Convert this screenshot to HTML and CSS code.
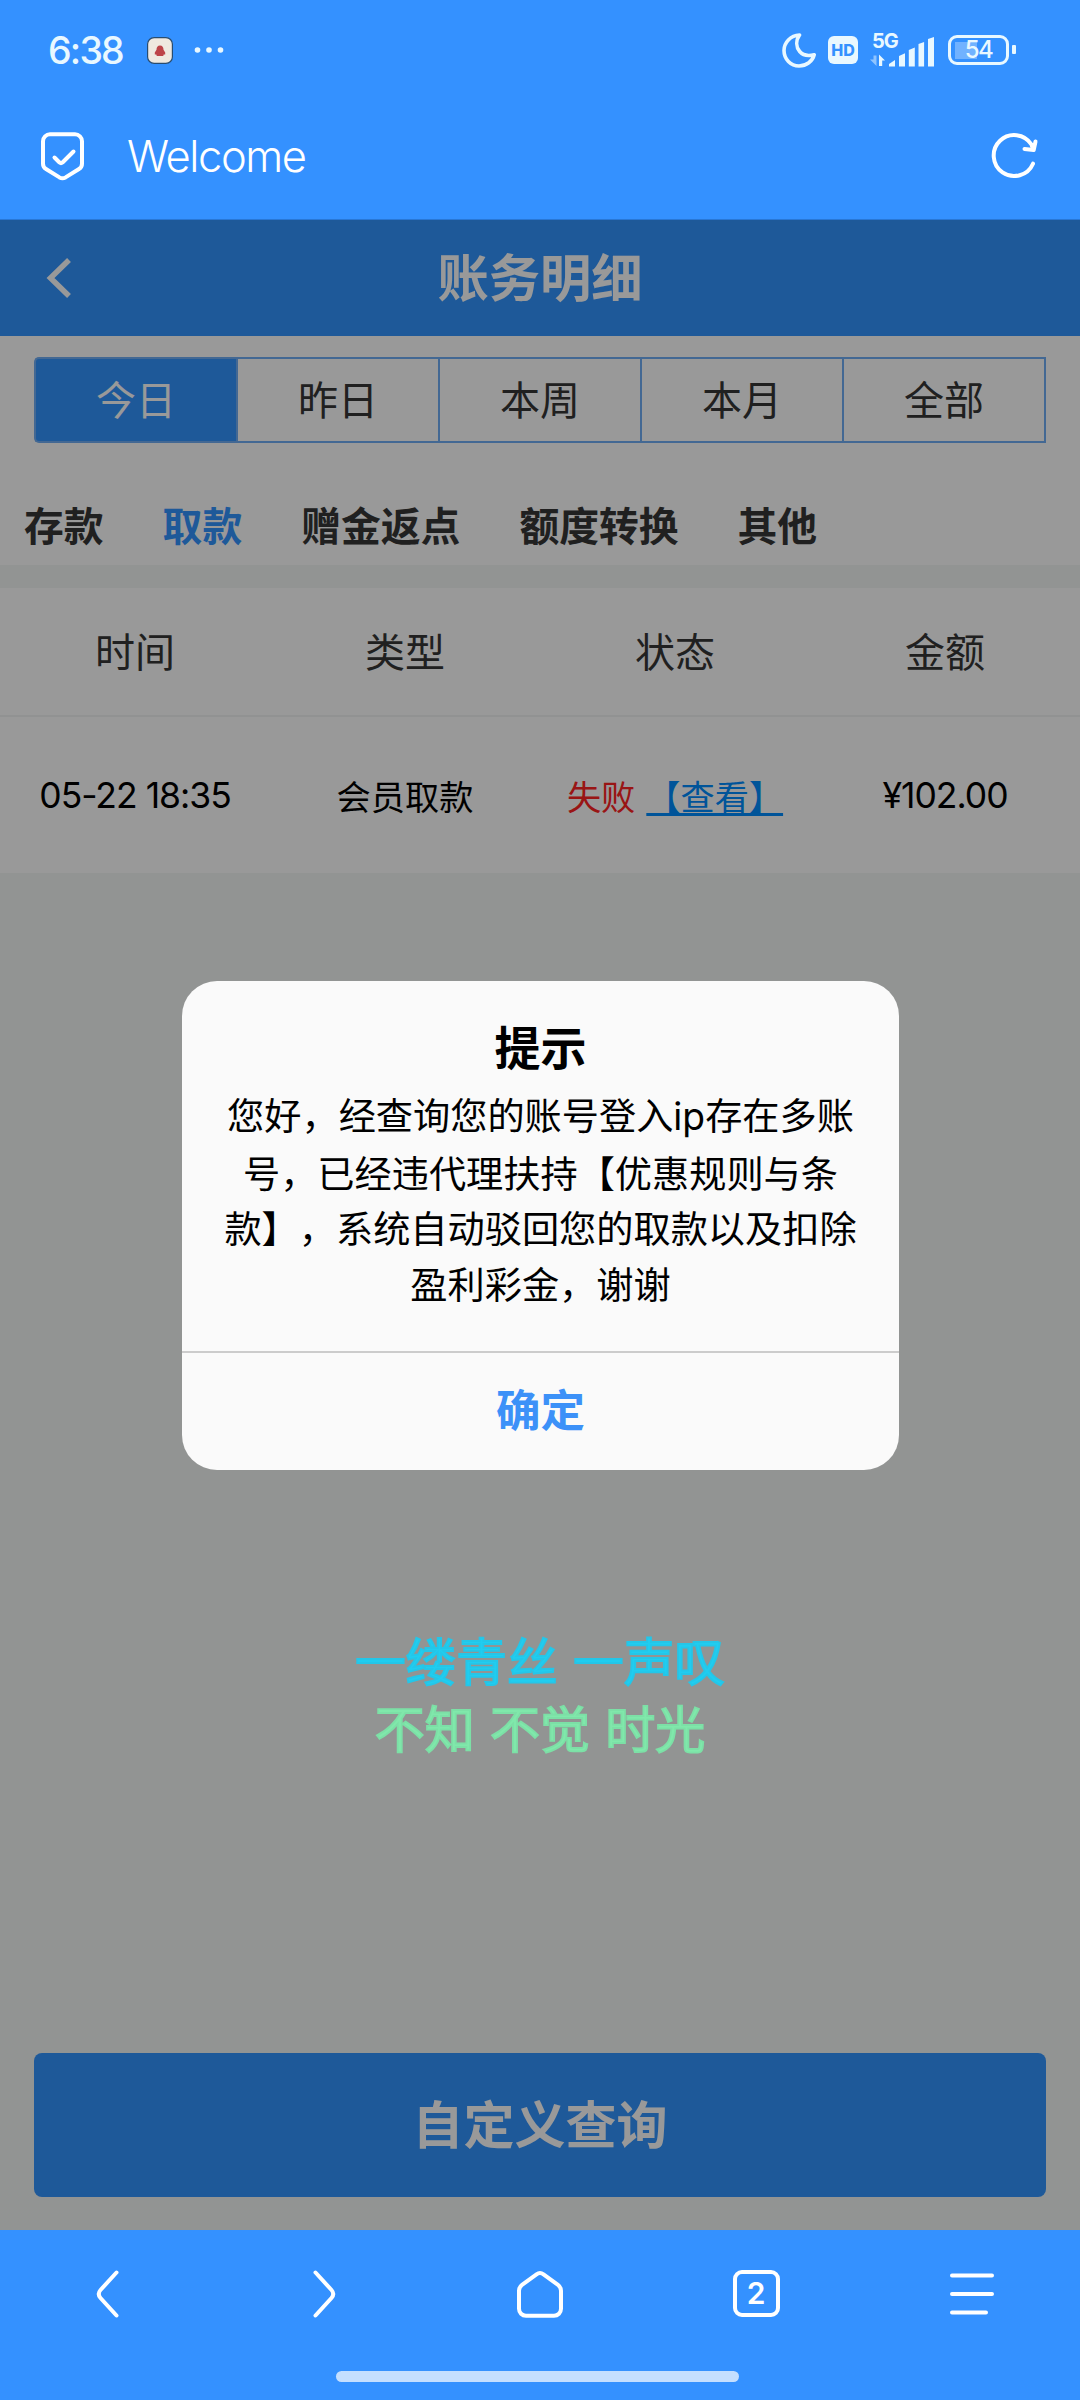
FILE: index.html
```html
<!DOCTYPE html>
<html lang="zh-CN">
<head>
<meta charset="utf-8">
<title>账务明细</title>
<link rel="stylesheet" href="styles.css">
</head>
<body>
<div class="screen">
  <header class="browser-top">
    <div class="status">
      <span class="clock">6:38</span>
      <svg class="app-badge" width="26" height="27" viewBox="0 0 26 27"><rect x=".6" y=".6" width="24.8" height="25.8" rx="6.5" fill="#efe8df" stroke="#284c70" stroke-width="1.2"/><path d="M13 8.500c2.400 0 3.500 2 3.500 4.200l1.700 2.800v2h-1.500l-.5 1.500h-6.400l-.5-1.500H7.800v-2l1.700-2.800c0-2.200 1.100-4.200 3.500-4.200z" fill="#bd4348"/></svg>
      <svg class="more-dots" width="30" height="8" viewBox="0 0 30 8" fill="#e9f8ff"><circle cx="3.500" cy="4" r="2.800"/><circle cx="15" cy="4" r="2.800"/><circle cx="26.500" cy="4" r="2.800"/></svg>
      <span class="grow"></span>
      <svg class="moon" width="34" height="35" viewBox="0 0 34 35" fill="none" stroke="#e9f8ff" stroke-width="3.600" stroke-linejoin="round"><path d="M17.500 2C8.500 2.500 2 9.500 2 17.500 2 26 8.700 33 17 33c7.500 0 13.600-4.800 15.200-11.300-6.500 1.700-11.400.5-14.500-3.200C14 14 13.700 7.500 17.500 2z"/></svg>
      <span class="hd">HD</span>
      <div class="signal">
        <span class="net">5G</span>
        <svg width="66" height="33" viewBox="0 0 66 33" fill="#e9f8ff"><path opacity=".5" d="M3.500 21.500h3v10.500L0 25.500h3.500z"/><path d="M9 32V20.500l6 6h-2.800V32z"/><path d="M19 32.500v-2.500l6-4v6.500zM29 32.500V22l6-2.800v13.300zM38.800 32.500V16l6-2.500v19zM48.500 32.500V10l5.600-2v24.500zM58 32.500V5l6-2v29.500z"/></svg>
      </div>
      <div class="battery"><span>54</span></div>
    </div>
    <div class="address">
      <svg width="48" height="52" viewBox="0 0 48 52" fill="none" stroke="#fff" stroke-width="4" stroke-linecap="round" stroke-linejoin="round"><path d="M11 4.300h25a7 7 0 0 1 7 7v22.500a6 6 0 0 1-3 5.200L26.500 47.400a6 6 0 0 1-6 0L7 39a6 6 0 0 1-3-5.200V11.300a7 7 0 0 1 7-7z"/><path d="M15.500 27.500l5 5q1.500 1.200 3 0l11-11"/></svg>
      <span class="page-name">Welcome</span>
      <span class="grow"></span>
      <svg width="48" height="48" viewBox="0 0 48 48" fill="none" stroke="#fff" stroke-width="4" stroke-linecap="round" stroke-linejoin="round"><path d="M42 31.700A20.500 20.500 0 1 1 40.500 12.500l1.500 4.500"/><path d="M44.500 9.500l-1.800 8.500-9.200-1"/></svg>
    </div>
  </header>

  <main class="page">
    <div class="title-bar">
      <svg class="back" width="26" height="40" viewBox="0 0 26 40" fill="none" stroke="#fff" stroke-width="5.500"><path d="M23 2L4.500 20l18.500 18"/></svg>
      <h1>账务明细</h1>
    </div>
    <div class="range">
      <span class="on">今日</span><span>昨日</span><span>本周</span><span>本月</span><span>全部</span>
    </div>
    <nav class="tabs"><span>存款</span><span class="on">取款</span><span>赠金返点</span><span>额度转换</span><span>其他</span></nav>
    <div class="row head"><span>时间</span><span>类型</span><span>状态</span><span>金额</span></div>
    <div class="row data"><span class="num date">05-22 18:35</span><span>会员取款</span><span class="state"><b>失败</b><a>【查看】</a></span><span class="num">¥102.00</span></div>
    <button class="query">自定义查询</button>
    <div class="shade"></div>
    <div class="watermark"><p class="wm-a">一缕青丝 一声叹</p><p class="wm-b">不知 不觉 时光</p></div>
    <div class="dialog">
      <h2>提示</h2>
      <p>您好，经查询您的账号登入<span class="ip">ip</span>存在多账<br>号，已经违代理扶持【优惠规则与条<br>款】，系统自动驳回您的取款以及扣除<br>盈利彩金，谢谢</p>
      <div class="ok">确定</div>
    </div>
  </main>

  <footer class="browser-bottom">
    <div class="keys">
      <span><svg width="48" height="52" viewBox="0 0 48 52"><path d="M32.500 4.500L16.500 22q-3.500 4 0 8l16 17.500"/></svg></span>
      <span><svg width="48" height="52" viewBox="0 0 48 52"><path d="M15.500 4.500L31.500 22q3.500 4 0 8l-16 17.500"/></svg></span>
      <span><svg width="48" height="52" viewBox="0 0 48 52"><path d="M20.500 6.300q3.500-2.600 7 0l14.500 10.500q3 2.200 3 6v18a7 7 0 0 1-7 7H10a7 7 0 0 1-7-7v-18q0-3.800 3-6z"/></svg></span>
      <span><i class="count">2</i></span>
      <span><svg width="48" height="52" viewBox="0 0 48 52"><path d="M4 7.500h40M4 26h40M4 44.500h34"/></svg></span>
    </div>
    <div class="pill"></div>
  </footer>
</div>
</body>
</html>
```
FILE: styles.css
```css
* { box-sizing: border-box; margin: 0; padding: 0; }
body { width: 1080px; height: 2400px; overflow: hidden; font-family: "Noto Sans CJK SC", sans-serif; }
.screen { display: flex; flex-direction: column; height: 2400px; }
svg { display: block; flex: none; }
.grow { flex: 1; }

.browser-top { height: 220px; background: #3491ff; color: #fff; font-family: Inter, sans-serif; border-bottom: 1px solid #2877d6; }
.status { height: 100px; display: flex; align-items: center; padding: 0 65px 0 48px; color: #e9f8ff; }
.clock { width: 99px; font-size: 37.500px; font-weight: 500; letter-spacing: -1.800px; }
.more-dots { margin-left: 21px; }
.hd { width: 30px; height: 28px; border-radius: 6px; background: #e9f8ff; color: #3491ff; font-size: 16px; font-weight: 800; line-height: 28px; text-align: center; margin: 0 12px; }
.signal { position: relative; width: 66px; height: 33px; margin-right: 12px; }
.net { position: absolute; left: 2px; top: -2px; font-size: 20px; font-weight: 700; line-height: 18px; letter-spacing: -1px; }
.battery { position: relative; width: 61px; height: 30px; border: 3.500px solid #e9f8ff; border-radius: 9px; margin-right: 6px; background: linear-gradient(#71b2ff, #71b2ff) 4px 50%/22px 17px no-repeat; font-size: 24px; font-weight: 500; line-height: 24px; text-align: center; letter-spacing: -1.500px; }
.battery::after { content: ""; position: absolute; right: -10px; top: 7px; width: 4px; height: 9px; background: #e9f8ff; border-radius: 1px; }
.address { height: 112px; display: flex; align-items: center; padding: 0 41px 0 39px; }
.page-name { margin-left: 40px; font-size: 43.500px; font-weight: 350; letter-spacing: -1.400px; }

.page { position: relative; height: 2010px; display: flex; flex-direction: column; background: #f3f7f5; color: #363636; }
.title-bar { height: 116px; flex: none; display: flex; align-items: center; padding: 0 46px; background: #3294ff; color: #fff; }
.title-bar h1 { flex: 1; font-size: 51.300px; font-weight: 600; line-height: 60px; text-align: center; margin-right: 26px; padding-bottom: 7px; }
.range { display: flex; flex: none; height: 128px; padding: 21px 34px; background: #fff; font-size: 40px; }
.range span { flex: 1; border: solid #70adf5; border-width: 2px 0 2px 2px; line-height: 79px; text-align: center; }
.range span:last-child { border-right-width: 2px; }
.range .on { background: #3294ff; color: #fff; border-radius: 5px 0 0 5px; }
.tabs { display: flex; gap: 59px; flex: none; height: 101px; padding: 32px 24px 0; background: #fff; font-size: 39.800px; font-weight: 600; line-height: 56px; color: #363636; }
.tabs .on { color: #3294ff; }
.row { display: grid; grid-template-columns: repeat(4, 1fr); flex: none; align-items: center; text-align: center; background: #fff; white-space: nowrap; }
.head { height: 129px; margin-top: 23px; padding-bottom: 3px; font-size: 40px; border-bottom: 2px solid #f2f4f4; }
.data { height: 156px; color: #000; font-size: 34.200px; }
.num { font-family: Inter, sans-serif; font-size: 35.500px; letter-spacing: -1px; }
.state { display: flex; justify-content: center; gap: 11px; text-spacing-trim: space-all; }
.state b { color: #ff2424; font-weight: 400; }
.state a { color: #008cff; text-decoration: underline 3px; text-underline-offset: 3px; text-decoration-skip-ink: none; }
.query { height: 144px; margin: auto 34px 33px; padding-bottom: 7px; border: 0; border-radius: 8px; background: #3294ff; color: #fff; font: 600 51px "Noto Sans CJK SC", sans-serif; }
.shade { position: absolute; inset: 0; background: rgba(0, 0, 0, .4); }

.watermark { position: absolute; top: 1406px; left: 0; width: 1080px; text-align: center; font-size: 50.700px; line-height: 67px; word-spacing: 4px; }
.wm-a { color: #20cdf0; -webkit-text-stroke: 1.800px #24c6e8; }
.wm-b { color: #80e8ab; font-size: 50px; -webkit-text-stroke: 1.800px #7ce0a6; }

.dialog { position: absolute; left: 182px; top: 761px; width: 717px; height: 489px; border-radius: 35px; background: #fafafa; color: #000; text-align: center; text-spacing-trim: space-all; }
.dialog h2 { font-size: 46px; font-weight: 600; line-height: 60px; padding-top: 34px; }
.dialog p { height: 276px; padding-top: 12px; font-size: 37.200px; line-height: 55.700px; white-space: nowrap; }
.ip { font-family: Inter, sans-serif; }
.ok { height: 118px; border-top: 2px solid #ccc; color: #3c91f8; font-size: 44.500px; font-weight: 600; line-height: 110px; }

.browser-bottom { height: 170px; background: #3491ff; }
.keys { display: flex; height: 141px; padding-bottom: 14px; }
.keys span { width: 216px; display: flex; align-items: center; justify-content: center; }
.keys path { fill: none; stroke: #fff; stroke-width: 4; stroke-linecap: round; stroke-linejoin: round; }
.count { width: 47px; height: 47px; border: 4px solid #fff; border-radius: 9px; color: #fff; font: 600 30px/39px Inter, sans-serif; text-align: center; }
.pill { width: 403px; height: 11px; margin-left: 336px; border-radius: 6px; background: #c4dfff; }
```
